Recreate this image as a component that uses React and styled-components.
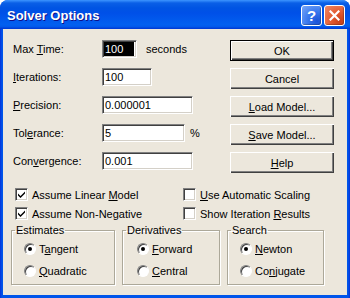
import React from 'react';
import styled, { createGlobalStyle } from 'styled-components';

const Global = createGlobalStyle`
  html, body { margin: 0; padding: 0; background: #fff; }
  body { font-family: "Liberation Sans", Arial, sans-serif; font-size: 11px; color: #000; }
`;

const face = '#ece7dc';

const Window = styled.div`
  width: 350px;
  height: 298px;
  box-sizing: border-box;
  background: linear-gradient(90deg, #0831d9, #0055ea 2px, #0055ea 348px, #0831d9);
  border-radius: 8px 8px 0 0;
  display: flex;
  flex-direction: column;
  overflow: hidden;
`;

const TitleBar = styled.div`
  height: 29px;
  flex: none;
  display: flex;
  align-items: center;
  justify-content: space-between;
  padding: 0 5px 0 7px;
  background: linear-gradient(180deg, #3d95ff 0, #0a5fe6 3px, #0054e3 8px, #0050e8 45%, #0260f0 85%, #0258ea 93%, #003dd7 97%, #003dd7);
`;

const Title = styled.span`
  font: bold 13px "Liberation Sans", Arial, sans-serif;
  color: #fff;
  text-shadow: 1px 1px #0f1089;
  padding-top: 1px;
`;

const Caps = styled.div`
  display: flex;
  gap: 2px;
  padding-top: 1px;
`;

const CapButton = styled.div`
  width: 21px;
  height: 21px;
  box-sizing: border-box;
  border: 1px solid #fff;
  border-radius: 3px;
  display: flex;
  align-items: center;
  justify-content: center;
  color: #fff;
  font: bold 15px "Liberation Sans", Arial, sans-serif;
  background: ${p => p.$close
    ? 'radial-gradient(circle at 80% 80%, #c8401a 0, #e2582e 40%, #f08a66 100%)'
    : 'radial-gradient(circle at 80% 80%, #1a52d8 0, #3a78ee 45%, #7aa8f8 100%)'};
  box-shadow: inset -1px -1px 1px rgba(0,0,0,0.25);
`;

const Body = styled.div`
  flex: 1;
  margin: 0 3px 3px;
  background: ${face};
  padding: 11px 13px 0 10px;
  display: flex;
  flex-direction: column;
`;

const Top = styled.div`
  display: flex;
  justify-content: space-between;
`;

const Form = styled.div`
  display: flex;
  flex-direction: column;
  gap: 10px;
`;

const Row = styled.div`
  display: flex;
  align-items: center;
  height: 18px;
`;

const Label = styled.span`
  width: 89px;
`;

const Field = styled.div`
  width: ${p => p.$w}px;
  height: 18px;
  box-sizing: border-box;
  background: #fff;
  border-top: 1px solid #808080;
  border-left: 1px solid #808080;
  border-right: 1px solid #fff;
  border-bottom: 1px solid #fff;
  box-shadow: inset 1px 1px #404040, inset -1px -1px #d4d0c8;
  padding: 0 2px;
  display: flex;
  align-items: center;
`;

const Selected = styled.span`
  flex: 1;
  background: #000;
  color: #fff;
  height: 14px;
  line-height: 14px;
  margin-left: -1px;
  padding-left: 1px;
`;

const Unit = styled.span`
  margin-left: ${p => p.$gap}px;
`;

const Buttons = styled.div`
  display: flex;
  flex-direction: column;
  gap: 7px;
  width: 104px;
`;

const Button = styled.div`
  height: 21px;
  box-sizing: border-box;
  display: flex;
  align-items: center;
  justify-content: center;
  background: ${face};
  border: ${p => (p.$default ? '1px solid #000' : 'none')};
  box-shadow: inset 1px 1px #fff, inset -1px -1px #404040, inset -2px -2px #808080;
`;

const U = styled.span`
  text-decoration: underline;
  text-underline-offset: 1px;
`;

const Checks = styled.div`
  margin-top: 15px;
  padding-left: 2px;
  display: grid;
  grid-template-columns: 168px auto;
  row-gap: 6px;
`;

const CheckItem = styled.div`
  display: flex;
  align-items: center;
  gap: 4px;
  height: 13px;
`;

const Box = styled.span`
  width: 13px;
  height: 13px;
  box-sizing: border-box;
  background: #fff;
  border-top: 1px solid #808080;
  border-left: 1px solid #808080;
  border-right: 1px solid #fff;
  border-bottom: 1px solid #fff;
  box-shadow: inset 1px 1px #404040, inset -1px -1px #d4d0c8;
  display: flex;
  align-items: center;
  justify-content: center;
`;

const Groups = styled.div`
  margin-top: 4px;
  margin-left: -2px;
  display: flex;
  gap: 7px;
`;

const Group = styled.fieldset`
  width: ${p => p.$w}px;
  height: 61px;
  box-sizing: border-box;
  margin: 0;
  padding: 5px 0 0 0;
  border: 1px solid #aca899;
  box-shadow: 1px 1px #fff, inset 1px 1px #fff;
`;

const Legend = styled.legend`
  padding: 0 1px;
  margin-left: 3px;
  line-height: 13px;
`;

const Options = styled.div`
  display: flex;
  flex-direction: column;
  gap: 9px;
  padding-left: ${p => p.$pad}px;
`;

const RadioItem = styled.div`
  display: flex;
  align-items: center;
  gap: 3px;
  height: 13px;
`;

const Circle = styled.span`
  width: 12px;
  height: 12px;
  box-sizing: border-box;
  border-radius: 50%;
  background: #fff;
  border: 1px solid;
  border-color: #808080 #fff #fff #808080;
  box-shadow: inset 1px 1px #404040;
  display: flex;
  align-items: center;
  justify-content: center;
`;

const Dot = styled.span`
  width: 4px;
  height: 4px;
  border-radius: 50%;
  background: #000;
`;

const Check = () => (
  <svg width="9" height="9" viewBox="0 0 9 9">
    <path d="M1 3.5 L3.5 6 L8 1.5 L8 3.5 L3.5 8 L1 5.5 Z" fill="#000" />
  </svg>
);

const CheckBox = ({ checked, children }) => (
  <CheckItem>
    <Box>{checked && <Check />}</Box>
    <span>{children}</span>
  </CheckItem>
);

const Radio = ({ checked, children }) => (
  <RadioItem>
    <Circle>{checked && <Dot />}</Circle>
    <span>{children}</span>
  </RadioItem>
);

export default function App() {
  return (
    <>
      <Global />
      <Window>
        <TitleBar>
          <Title>Solver Options</Title>
          <Caps>
            <CapButton>?</CapButton>
            <CapButton $close>
              <svg width="11" height="11" viewBox="0 0 11 11">
                <path d="M1.5 1.5 L9.5 9.5 M9.5 1.5 L1.5 9.5" stroke="#fff" strokeWidth="2.2" strokeLinecap="square" />
              </svg>
            </CapButton>
          </Caps>
        </TitleBar>
        <Body>
          <Top>
            <Form>
              <Row>
                <Label>Max <U>T</U>ime:</Label>
                <Field $w={35}><Selected>100</Selected></Field>
                <Unit $gap={9}>seconds</Unit>
              </Row>
              <Row>
                <Label><U>I</U>terations:</Label>
                <Field $w={50}>100</Field>
              </Row>
              <Row>
                <Label><U>P</U>recision:</Label>
                <Field $w={91}>0.000001</Field>
              </Row>
              <Row>
                <Label>Tol<U>e</U>rance:</Label>
                <Field $w={83}>5</Field>
                <Unit $gap={5}>%</Unit>
              </Row>
              <Row>
                <Label>Con<U>v</U>ergence:</Label>
                <Field $w={91}>0.001</Field>
              </Row>
            </Form>
            <Buttons>
              <Button $default>OK</Button>
              <Button>Cancel</Button>
              <Button><span><U>L</U>oad Model...</span></Button>
              <Button><span><U>S</U>ave Model...</span></Button>
              <Button><span><U>H</U>elp</span></Button>
            </Buttons>
          </Top>
          <Checks>
            <CheckBox checked>Assume Linear <U>M</U>odel</CheckBox>
            <CheckBox><U>U</U>se Automatic Scaling</CheckBox>
            <CheckBox checked>Assume Non-Ne<U>g</U>ative</CheckBox>
            <CheckBox>Show Iteration <U>R</U>esults</CheckBox>
          </Checks>
          <Groups>
            <Group $w={104}>
              <Legend>Estimates</Legend>
              <Options $pad={12}>
                <Radio checked>T<U>a</U>ngent</Radio>
                <Radio><U>Q</U>uadratic</Radio>
              </Options>
            </Group>
            <Group $w={98}>
              <Legend>Derivatives</Legend>
              <Options $pad={14}>
                <Radio checked><U>F</U>orward</Radio>
                <Radio><U>C</U>entral</Radio>
              </Options>
            </Group>
            <Group $w={97}>
              <Legend>Search</Legend>
              <Options $pad={12}>
                <Radio checked><U>N</U>ewton</Radio>
                <Radio>Co<U>n</U>jugate</Radio>
              </Options>
            </Group>
          </Groups>
        </Body>
      </Window>
    </>
  );
}
